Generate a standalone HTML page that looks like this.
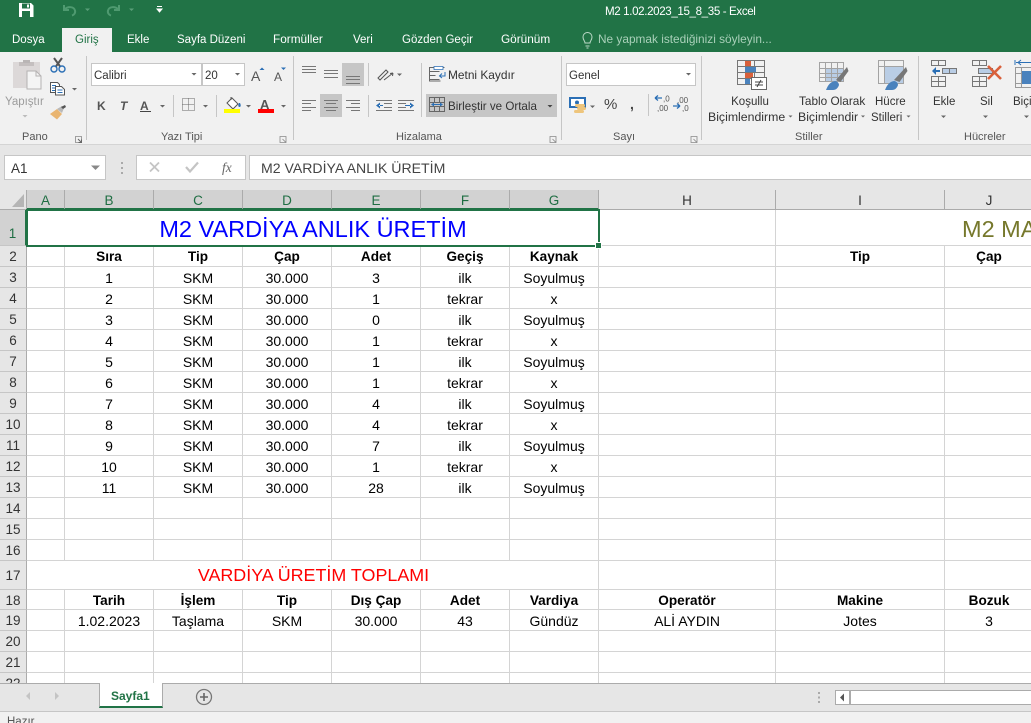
<!DOCTYPE html>
<html lang="tr"><head><meta charset="utf-8"><title>M2 1.02.2023_15_8_35 - Excel</title>
<style>
html,body{margin:0;padding:0;width:1031px;height:723px;overflow:hidden;background:#f1f1f1}
body{position:relative;font-family:"Liberation Sans",sans-serif;color:#444}
.a{position:absolute}
.t{position:absolute;white-space:nowrap;font-size:11.5px;line-height:14px}
.c{transform:translateX(-50%)}
.w{color:#fff}
.lb{color:#555;font-size:11px}
.box{position:absolute;background:#fff;border:1px solid #c6c6c6;box-sizing:border-box}
.ch{position:absolute;top:190px;height:20px;box-sizing:border-box;border-right:1px solid #ababab;border-bottom:1px solid #ababab;background:#e6e6e6;text-align:center;font-size:13.5px;line-height:22px;color:#333}
.ch.s{background:#d2d2d2;color:#1f6e43;border-bottom:2px solid #217346}
table{border-collapse:separate;border-spacing:0;table-layout:fixed}
#g td{box-sizing:border-box;border-right:1px solid #d4d4d4;border-bottom:1px solid #d4d4d4;padding:2px 0 0;text-align:center;font-size:14px;color:#000;white-space:nowrap;overflow:hidden;line-height:16px}
#g tr.b td{font-weight:bold;font-size:13.6px}
#r td{box-sizing:border-box;width:27px;padding:2px 0 0;background:#e6e6e6;border-right:1px solid #ababab;border-bottom:1px solid #c6c6c6;text-align:center;font-size:13.5px;color:#333;line-height:16px}
</style></head><body>

<!-- title bar -->
<div class="a" style="left:0;top:0;width:1031px;height:52px;background:#217346"></div>
<div class="t w" style="left:605px;top:5px;font-size:11.6px;letter-spacing:-.38px">M2 1.02.2023_15_8_35 - Excel</div>
<div class="a" style="left:62px;top:28px;width:50px;height:24px;background:#f1f1f1"></div>
<div class="t w" style="left:12px;top:33px">Dosya</div>
<div class="t" style="left:75px;top:33px;color:#217346">Giriş</div>
<div class="t w" style="left:127px;top:33px">Ekle</div>
<div class="t w" style="left:177px;top:33px">Sayfa Düzeni</div>
<div class="t w" style="left:273px;top:32px;font-size:11.8px">Formüller</div>
<div class="t w" style="left:353px;top:33px">Veri</div>
<div class="t w" style="left:402px;top:33px">Gözden Geçir</div>
<div class="t w" style="left:501px;top:32px;font-size:11.8px">Görünüm</div>
<div class="t" style="left:598px;top:32px;color:#a9d0b9;font-size:11.85px">Ne yapmak istediğinizi söyleyin...</div>

<!-- ribbon base -->
<div class="a" style="left:0;top:144px;width:1031px;height:46px;background:#e6e6e6;border-top:1px solid #d4d4d4;box-sizing:border-box"></div>

<!-- ribbon fields and highlighted buttons -->
<div class="box" style="left:91px;top:63px;width:111px;height:23px"></div>
<div class="box" style="left:202px;top:63px;width:43px;height:23px"></div>
<div class="t" style="left:94px;top:69px;color:#333">Calibri</div>
<div class="t" style="left:205px;top:69px;color:#333">20</div>
<div class="a" style="left:342px;top:63px;width:22px;height:23px;background:#c6c6c6"></div>
<div class="a" style="left:320px;top:94px;width:22px;height:23px;background:#c6c6c6"></div>
<div class="a" style="left:426px;top:94px;width:131px;height:23px;background:#c6c6c6"></div>
<div class="box" style="left:566px;top:63px;width:130px;height:23px"></div>
<div class="t" style="left:569px;top:69px;color:#333">Genel</div>

<!-- ribbon icons -->
<svg class="a" style="left:0;top:0" width="1031" height="150" viewBox="0 0 1031 150" fill="none">
 <!-- save -->
 <path d="M19 3h12l2.500 2.500V17H19z" fill="#fff"/><path d="M22 3.500h8v5h-8z" fill="#217346"/><path d="M27 4.500h2v3h-2z" fill="#fff"/><path d="M22 11h8v6h-8z" fill="#217346"/>
 <!-- undo/redo -->
 <path d="M64 5v5h5M64.500 9.500C68 6 74 6.500 75 10.500c.6 2.500-1 4.500-3 5" stroke="#4f9a70" stroke-width="2"/>
 <path d="M119 5v5h-5M118.500 9.500C115 6 109 6.500 108 10.500c-.6 2.500 1 4.500 3 5" stroke="#4f9a70" stroke-width="2"/>
 <path d="M85 8.500h5l-2.500 2.500zM129 8.500h5l-2.500 2.500z" fill="#5a9f79"/>
 <path d="M157 6.500h5M157 9h5l-2.500 3z" stroke="#fff" fill="#fff"/>
 <!-- lightbulb -->
 <path d="M585 43c0-2-2-3-2-6a4.500 4.500 0 0 1 9 0c0 3-2 4-2 6zM585.500 46h4M586.500 48h2" stroke="#bcdac8" stroke-width="1"/>

 <!-- paste -->
 <path d="M13 62h27v26H13z" fill="#dcd8d8"/><path d="M19 62h15v4H19z" fill="#c4bfbf"/><path d="M23 60h7v3h-7z" fill="#b9b5b5"/>
 <path d="M27 71h9l5 5v13H27z" fill="#f4f4f4" stroke="#b5b2b2"/><path d="M36 71v5h5" stroke="#b5b2b2"/>
 <path d="M22.500 115h5l-2.500 2.500z" fill="#bbb"/>
 <!-- cut -->
 <path d="M54 58l6.500 9M62 58l-6.500 9" stroke="#555" stroke-width="2"/>
 <circle cx="54" cy="69" r="3" stroke="#2b6fb5" stroke-width="1.400"/><circle cx="62" cy="69" r="3" stroke="#2b6fb5" stroke-width="1.400"/>
 <!-- copy -->
 <path d="M50.500 82.500h7l2 2v8h-9z" fill="#fff" stroke="#555"/><path d="M55.500 86.500h6l3 3v5.500h-9z" fill="#fff" stroke="#555"/>
 <path d="M52 85.500h4M52 88h3M52 90.500h3M57.500 90h5M57.500 92.500h5" stroke="#2b6fb5"/>
 <path d="M72 88h5l-2.500 2.500z" fill="#666"/>
 <!-- painter -->
 <path d="M50 114l7-5 5 5-5 5.500z" fill="#e9b571"/><path d="M57 109l5-3 2 2-2 5z" fill="#b9b9b9"/><path d="M61 107l4-2 1 2-3 2z" fill="#555"/>
 <path d="M75.500 136.500h6v6h-6z" stroke="#888" stroke-width=".8"/><path d="M78 139l3.500 3.500M81.500 139.500v3h-3" stroke="#666"/>
 <path d="M86.500 56v84M293.500 56v84M561.500 56v84M701.500 56v84M918.500 56v84" stroke="#c6c6c6"/>
 <!-- font dropdowns -->
 <path d="M191.500 73h5l-2.500 2.500zM235 73h5l-2.500 2.500zM686 73h5l-2.500 2.500z" fill="#666"/>
 <!-- grow/shrink -->
 <text x="251" y="81" font-family="Liberation Sans" font-size="14" fill="#555">A</text>
 <path d="M259.500 70h5l-2.500-2.500z" fill="#2b6fb5"/>
 <text x="274" y="81" font-family="Liberation Sans" font-size="12" fill="#555">A</text>
 <path d="M281 67.500h5l-2.500 2.500z" fill="#2b6fb5"/>
 <!-- bold/italic/underline -->
 <text x="97" y="110" font-family="Liberation Sans" font-weight="bold" font-size="12" fill="#555">K</text>
 <text x="120" y="110" font-family="Liberation Sans" font-weight="bold" font-style="italic" font-size="12" fill="#555">T</text>
 <text x="140" y="110" font-family="Liberation Sans" font-weight="bold" font-size="12" fill="#555">A</text>
 <path d="M140 111.500h11" stroke="#444"/>
 <path d="M160 105h5l-2.500 2.500zM203 105h5l-2.500 2.500zM246 105h5l-2.500 2.500zM281 105h5l-2.500 2.500z" fill="#666"/>
 <path d="M173.500 95v22M216.500 95v22" stroke="#c6c6c6"/>
 <!-- borders -->
 <path d="M182.500 98.500h12v12h-12zM188.500 98.500v12M182.500 104.500h12" stroke="#666" stroke-dasharray="1 1"/>
 <!-- fill colour -->
 <path d="M227 103l5-5 6 6-5 5z" fill="#fff" stroke="#555"/><path d="M231 97v3" stroke="#555"/>
 <path d="M239 103c-1 2-1 4 .500 4s1.500-2 .500-4z" fill="#2b6fb5"/>
 <rect x="224" y="109" width="16" height="4" fill="#ffff00"/>
 <!-- font colour -->
 <text x="260" y="109" font-family="Liberation Sans" font-weight="bold" font-size="13" fill="#555">A</text>
 <rect x="258" y="109" width="16" height="4" fill="#ff0000"/>
 <!-- alignment -->
 <g stroke="#777"><path d="M302 66.500h14M302 69.500h14M302 72.500h14"/><path d="M324 70.500h14M324 73.500h14M324 77.500h14"/><path d="M346 76.500h14M346 79.500h14M346 83.500h14"/>
 <path d="M302 100.500h14M302 103.500h9M302 107.500h14M302 110.500h9"/><path d="M324 100.500h14M326 103.500h10M324 107.500h14M326 110.500h10"/><path d="M346 100.500h14M351 103.500h9M346 107.500h14M351 110.500h9"/>
 <path d="M376 100.500h16M384 103.500h8M384 107.500h8M376 110.500h16M398 100.500h16M398 103.500h8M398 107.500h8M398 110.500h16" /></g>
 <path d="M376 105.500l4-3v6zM383 105h-4v1h4zM414 105.500l-4-3v6zM405 105h6v1h-6z" fill="#2b6fb5"/>
 <path d="M368.500 63v23M368.500 95v22M421.500 63v54" stroke="#c6c6c6"/>
 <!-- orientation -->
 <path d="M378 78l8-8 2 2-8 8zM384 80l9-7M393 73l-3 .5M393 73l-.5 3" stroke="#555" fill="none"/>
 <path d="M397 73.500h5l-2.500 2.500z" fill="#666"/>
 <!-- wrap text -->
 <path d="M429.500 67.500h15M429.500 71.500h10M429.500 75.500h6M429.500 79.500h10" stroke="#666"/>
 <path d="M429.500 67v14h11" stroke="#666"/><path d="M434 66.500h9v3h-9z" fill="#fff" stroke="#2b6fb5" stroke-width=".8"/>
 <path d="M445 72v4h-5M442 73.500l-2.500 2.500 2.500 2" stroke="#2b6fb5"/>
 <!-- merge -->
 <path d="M429.500 97.500h15v14h-15zM429.500 102.500h15M429.500 106.500h15M434.500 97.500v5M439.500 97.500v5M434.500 106.500v5M439.500 106.500v5" stroke="#666"/>
 <path d="M432 104.500h10" stroke="#2b6fb5"/><path d="M434 102.500l-3 2 3 2zM440 102.500l3 2-3 2z" fill="#2b6fb5"/>
 <path d="M547.500 105h5l-2.500 2.500z" fill="#444"/>
 <!-- accounting -->
 <rect x="570" y="98" width="15" height="9" fill="#fff" stroke="#2b6fb5" stroke-width="2"/><circle cx="577" cy="102.500" r="2" fill="#2b6fb5"/>
 <rect x="575" y="104" width="10" height="3" rx="1.500" fill="#eec57c"/><rect x="577" y="107" width="9" height="3" rx="1.500" fill="#eec57c"/><rect x="574" y="110" width="10" height="3" rx="1.500" fill="#eec57c"/>
 <path d="M590 105.500h5l-2.500 2.500z" fill="#666"/>
 <path d="M648.500 94v22" stroke="#c6c6c6"/>
 <path d="M655 98h7M655 98l3-2.500M655 98l3 2.500M680 106h-7M680 106l-3-2.500M680 106l-3 2.500" stroke="#2b6fb5" stroke-width="1.300"/>
 <text x="663" y="101.500" font-family="Liberation Sans" font-size="8" fill="#555">,0</text>
 <text x="657" y="111" font-family="Liberation Sans" font-size="8" fill="#555">,00</text>
 <text x="677" y="103" font-family="Liberation Sans" font-size="8" fill="#555">,00</text>
 <text x="682" y="111" font-family="Liberation Sans" font-size="8" fill="#555">,0</text>
 <path d="M550 136.500h6v6h-6zM552.500 139l3.500 3.500" stroke="#888" stroke-width=".8" transform="translate(-270 0)"/>
 <path d="M550 136.500h6v6h-6zM552.500 139l3.500 3.500" stroke="#888" stroke-width=".8"/>
 <path d="M550 136.500h6v6h-6zM552.500 139l3.500 3.500" stroke="#888" stroke-width=".8" transform="translate(141 0)"/>
 <!-- conditional formatting -->
 <path d="M737.500 60.500h27v24h-27zM737.500 66.500h27M737.500 72.500h27M737.500 78.500h27M745.500 60.500v24M754.500 60.500v24" stroke="#777"/>
 <rect x="745" y="61" width="6" height="5" fill="#d9603b"/><rect x="745" y="67" width="11" height="5" fill="#4a82bd"/><rect x="745" y="73" width="8" height="5" fill="#d9603b"/><rect x="745" y="79" width="5" height="5" fill="#4a82bd"/>
 <rect x="751.500" y="77.500" width="15" height="12" fill="#fff" stroke="#666"/>
 <path d="M755 82h8M755 85h8M761 80l-4 7" stroke="#444"/>
 <!-- format as table -->
 <rect x="826" y="68" width="18" height="14" fill="#b9cde5"/>
 <path d="M819.500 62.500h24v19h-24zM819.500 68.500h24M819.500 73.500h24M819.500 77.500h24M825.500 62.500v19M831.500 62.500v19M837.500 62.500v19" stroke="#a3a3a3"/>
 <path d="M836 80l11-13 1.500 4-8 11z" fill="#777"/>
 <path d="M826 90c2-5 4-8 9-9 2 0 4 2 4 4-1 3-3 5-6 5z" fill="#4a82bd"/>
 <!-- cell styles -->
 <rect x="885" y="67" width="18" height="16" fill="#b9cde5"/>
 <path d="M878.500 60.500h25v23h-25zM878.500 66.500h25M884.500 60.500v23" stroke="#a3a3a3"/>
 <path d="M894 80l12-13 1.500 4-8 11z" fill="#777"/>
 <path d="M885 90c2-5 4-8 9-9 2 0 4 2 4 4-1 3-3 5-6 5z" fill="#4a82bd"/>
 <!-- insert -->
 <path d="M931.500 60.500h14v5h-14zM938.500 60.500v5M931.500 76.500h14v10h-14zM931.500 81.500h14M938.500 76.500v10" stroke="#777"/>
 <path d="M942.500 68.500h14v5h-14zM949.500 68.500v5" stroke="#777" fill="#b9cde5"/>
 <path d="M933 71h7" stroke="#2b6fb5" stroke-width="2"/><path d="M936 67l-4 4 4 4z" fill="#2b6fb5"/>
 <path d="M941 115.500h5l-2.500 2.500z" fill="#666"/>
 <!-- delete -->
 <path d="M972.500 60.500h14v5h-14zM979.500 60.500v5M972.500 76.500h14v10h-14zM972.500 81.500h14M979.500 76.500v10" stroke="#777"/>
 <path d="M978.500 68.500h14v5h-14z" stroke="#777" fill="#b9cde5"/>
 <path d="M988 66l13 13M1001 66l-13 13" stroke="#d9603b" stroke-width="2.600"/>
 <path d="M983 115.500h5l-2.500 2.500z" fill="#666"/>
 <!-- format -->
 <path d="M1015 60v5M1016 62.500h15" stroke="#2b6fb5"/><path d="M1021 60l-3 2.500 3 2.500" stroke="#2b6fb5"/>
 <path d="M1015.500 67.500h16v20h-16zM1021.500 67.500v20M1015.500 73.500h16M1015.500 83.500h16" stroke="#999"/>
 <rect x="1022" y="71" width="9" height="13" fill="#4a82bd"/>
 <path d="M1024 115.500h5l-2.500 2.500z" fill="#666"/>
 <path d="M788.500 115.500h4l-2 2zM861 115.500h4l-2 2zM906.500 115.500h4l-2 2z" fill="#666"/>
</svg>

<!-- ribbon text -->
<div class="t" style="left:5px;top:95px;color:#9c9c9c">Yapıştır</div>
<div class="t lb" style="left:22px;top:130px">Pano</div>
<div class="t lb" style="left:161px;top:130px">Yazı Tipi</div>
<div class="t lb" style="left:396px;top:130px">Hizalama</div>
<div class="t lb" style="left:613px;top:130px">Sayı</div>
<div class="t lb" style="left:795px;top:130px">Stiller</div>
<div class="t lb" style="left:964px;top:130px">Hücreler</div>
<div class="t" style="left:448px;top:68px;color:#333;font-size:11.9px">Metni Kaydır</div>
<div class="t" style="left:448px;top:100px;color:#333;font-size:11.6px">Birleştir ve Ortala</div>
<div class="t" style="left:604px;top:98px;color:#444;font-size:15px;font-weight:normal">%</div>
<div class="t" style="left:630px;top:97px;color:#444;font-size:14px;font-weight:bold">,</div>
<div class="t c" style="left:750px;top:95px;color:#333">Koşullu</div>
<div class="t" style="left:708px;top:110px;color:#333;font-size:12.3px">Biçimlendirme</div>
<div class="t" style="left:799px;top:94px;color:#333;font-size:11.8px">Tablo Olarak</div>
<div class="t" style="left:798px;top:110px;color:#333;font-size:12.3px">Biçimlendir</div>
<div class="t" style="left:875px;top:95px;color:#333">Hücre</div>
<div class="t" style="left:871px;top:111px;color:#333">Stilleri</div>
<div class="t" style="left:933px;top:95px;color:#333">Ekle</div>
<div class="t" style="left:980px;top:95px;color:#333">Sil</div>
<div class="t" style="left:1013px;top:95px;color:#333">Biçim</div>

<!-- formula bar -->
<div class="box" style="left:4px;top:155px;width:102px;height:25px"></div>
<div class="t" style="left:11px;top:162px;font-size:13.5px;color:#333">A1</div>
<div class="box" style="left:136px;top:155px;width:110px;height:25px"></div>
<div class="box" style="left:249px;top:155px;width:790px;height:25px"></div>
<div class="t" style="left:261px;top:161px;font-size:14.1px;color:#444">M2 VARDİYA ANLIK ÜRETİM</div>
<svg class="a" style="left:0;top:150px" width="250" height="40" fill="none">
 <path d="M91 15.500h9l-4.500 4.500z" fill="#888"/>
 <path d="M121 12h2v2h-2zM121 17h2v2h-2zM121 22h2v2h-2z" fill="#aaa"/>
 <path d="M150 12.500l9 9M159 12.500l-9 9" stroke="#c4c4c4" stroke-width="1.800"/>
 <path d="M186 17l4 4.500 8-9" stroke="#c4c4c4" stroke-width="2.200"/>
 <text x="222" y="22" font-family="Liberation Serif" font-style="italic" font-size="13.500" fill="#666">fx</text>
</svg>

<!-- column headers -->
<div class="ch" style="left:0;width:27px"></div>
<svg class="a" style="left:11px;top:193px" width="14" height="14"><path d="M13 1v13H1z" fill="#b5b5b5"/></svg>
<div class="ch s" style="left:27px;width:38px">A</div>
<div class="ch s" style="left:65px;width:89px">B</div>
<div class="ch s" style="left:154px;width:89px">C</div>
<div class="ch s" style="left:243px;width:89px">D</div>
<div class="ch s" style="left:332px;width:89px">E</div>
<div class="ch s" style="left:421px;width:89px">F</div>
<div class="ch s" style="left:510px;width:89px">G</div>
<div class="ch" style="left:599px;width:177px">H</div>
<div class="ch" style="left:776px;width:169px">I</div>
<div class="ch" style="left:945px;width:89px">J</div>

<!-- row headers -->
<div class="a" style="left:0;top:210px;width:27px;height:473px;overflow:hidden">
<table id="r"><tbody>
<tr style="height:36px"><td style="background:#d2d2d2;color:#1f6e43;border-right:2px solid #217346;padding-top:12px">1</td></tr>
<tr style="height:21px"><td>2</td></tr><tr style="height:21px"><td>3</td></tr><tr style="height:21px"><td>4</td></tr><tr style="height:21px"><td>5</td></tr><tr style="height:21px"><td>6</td></tr><tr style="height:21px"><td>7</td></tr><tr style="height:21px"><td>8</td></tr><tr style="height:21px"><td>9</td></tr><tr style="height:21px"><td>10</td></tr><tr style="height:21px"><td>11</td></tr><tr style="height:21px"><td>12</td></tr><tr style="height:21px"><td>13</td></tr><tr style="height:21px"><td>14</td></tr><tr style="height:21px"><td>15</td></tr><tr style="height:21px"><td>16</td></tr>
<tr style="height:29px"><td>17</td></tr><tr style="height:20px"><td>18</td></tr><tr style="height:21px"><td>19</td></tr><tr style="height:21px"><td>20</td></tr><tr style="height:21px"><td>21</td></tr><tr style="height:21px"><td>22</td></tr>
</tbody></table></div>

<!-- grid -->
<div class="a" style="left:27px;top:210px;width:1004px;height:473px;overflow:hidden;background:#fff">
<table id="g" style="width:1007px"><colgroup><col style="width:38px"><col style="width:89px"><col style="width:89px"><col style="width:89px"><col style="width:89px"><col style="width:89px"><col style="width:89px"><col style="width:177px"><col style="width:169px"><col style="width:89px"></colgroup><tbody>
<tr style="height:36px"><td colspan="7"></td><td></td><td colspan="2"></td></tr>
<tr class="b" style="height:21px"><td></td><td>Sıra</td><td>Tip</td><td>Çap</td><td>Adet</td><td>Geçiş</td><td>Kaynak</td><td></td><td>Tip</td><td>Çap</td></tr>
<tr style="height:21px"><td></td><td>1</td><td>SKM</td><td>30.000</td><td>3</td><td>ilk</td><td>Soyulmuş</td><td></td><td></td><td></td></tr>
<tr style="height:21px"><td></td><td>2</td><td>SKM</td><td>30.000</td><td>1</td><td>tekrar</td><td>x</td><td></td><td></td><td></td></tr>
<tr style="height:21px"><td></td><td>3</td><td>SKM</td><td>30.000</td><td>0</td><td>ilk</td><td>Soyulmuş</td><td></td><td></td><td></td></tr>
<tr style="height:21px"><td></td><td>4</td><td>SKM</td><td>30.000</td><td>1</td><td>tekrar</td><td>x</td><td></td><td></td><td></td></tr>
<tr style="height:21px"><td></td><td>5</td><td>SKM</td><td>30.000</td><td>1</td><td>ilk</td><td>Soyulmuş</td><td></td><td></td><td></td></tr>
<tr style="height:21px"><td></td><td>6</td><td>SKM</td><td>30.000</td><td>1</td><td>tekrar</td><td>x</td><td></td><td></td><td></td></tr>
<tr style="height:21px"><td></td><td>7</td><td>SKM</td><td>30.000</td><td>4</td><td>ilk</td><td>Soyulmuş</td><td></td><td></td><td></td></tr>
<tr style="height:21px"><td></td><td>8</td><td>SKM</td><td>30.000</td><td>4</td><td>tekrar</td><td>x</td><td></td><td></td><td></td></tr>
<tr style="height:21px"><td></td><td>9</td><td>SKM</td><td>30.000</td><td>7</td><td>ilk</td><td>Soyulmuş</td><td></td><td></td><td></td></tr>
<tr style="height:21px"><td></td><td>10</td><td>SKM</td><td>30.000</td><td>1</td><td>tekrar</td><td>x</td><td></td><td></td><td></td></tr>
<tr style="height:21px"><td></td><td>11</td><td>SKM</td><td>30.000</td><td>28</td><td>ilk</td><td>Soyulmuş</td><td></td><td></td><td></td></tr>
<tr style="height:21px"><td></td><td></td><td></td><td></td><td></td><td></td><td></td><td></td><td></td><td></td></tr>
<tr style="height:21px"><td></td><td></td><td></td><td></td><td></td><td></td><td></td><td></td><td></td><td></td></tr>
<tr style="height:21px"><td></td><td></td><td></td><td></td><td></td><td></td><td></td><td></td><td></td><td></td></tr>
<tr style="height:29px"><td colspan="7" style="color:#ff0000;font-size:17.9px;line-height:26px;padding:0 0 0 2px">VARDİYA ÜRETİM TOPLAMI</td><td></td><td></td><td></td></tr>
<tr class="b" style="height:20px"><td></td><td>Tarih</td><td>İşlem</td><td>Tip</td><td>Dış Çap</td><td>Adet</td><td>Vardiya</td><td>Operatör</td><td>Makine</td><td>Bozuk</td></tr>
<tr style="height:21px"><td></td><td>1.02.2023</td><td>Taşlama</td><td>SKM</td><td>30.000</td><td>43</td><td>Gündüz</td><td>ALİ AYDIN</td><td>Jotes</td><td>3</td></tr>
<tr style="height:21px"><td></td><td></td><td></td><td></td><td></td><td></td><td></td><td></td><td></td><td></td></tr>
<tr style="height:21px"><td></td><td></td><td></td><td></td><td></td><td></td><td></td><td></td><td></td><td></td></tr>
<tr style="height:21px"><td></td><td></td><td></td><td></td><td></td><td></td><td></td><td></td><td></td><td></td></tr>
</tbody></table></div>

<!-- merged titles and selection -->
<div class="t c" style="left:313px;top:214px;font-size:23.5px;line-height:30px;color:#0000ff">M2 VARDİYA ANLIK ÜRETİM</div>
<div class="t" style="left:962px;top:214px;font-size:23.5px;line-height:30px;color:#76782c">M2 MA</div>
<div class="a" style="left:26px;top:209px;width:574px;height:38px;border:2px solid #217346;box-sizing:border-box"></div>
<div class="a" style="left:595px;top:242px;width:5px;height:5px;background:#217346;border:1px solid #fff"></div>

<!-- sheet tabs -->
<div class="a" style="left:0;top:683px;width:1031px;height:29px;background:#e6e6e6;border-top:1px solid #ababab;border-bottom:1px solid #c6c6c6;box-sizing:border-box"></div>
<div class="a" style="left:99px;top:683px;width:64px;height:25px;background:#fff;border-left:1px solid #ababab;border-right:1px solid #ababab;border-bottom:2px solid #217346;box-sizing:border-box"></div>
<div class="t" style="left:111px;top:689px;font-size:12px;font-weight:bold;color:#217346">Sayfa1</div>
<svg class="a" style="left:0;top:684px" width="1031" height="27" fill="none">
 <path d="M30 8v8l-4-4zM55 8v8l4-4z" fill="#c4c4c4"/>
 <circle cx="204" cy="13" r="7.500" stroke="#777" stroke-width="1.300"/><path d="M200 13h8M204 9v8" stroke="#666" stroke-width="1.600"/>
 <path d="M818 8h2v2h-2zM818 12.500h2v2h-2zM818 17h2v2h-2z" fill="#aaa"/>
 <path d="M1031 6.500H835.500v14H1031" fill="#fff" stroke="#ababab"/>
 <rect x="849" y="7" width="2" height="13" fill="#ababab"/>
 <path d="M844 9.500v8l-4-4z" fill="#555"/>
</svg>

<!-- status bar -->
<div class="t" style="left:7px;top:715px;font-size:11.5px;color:#555">Hazır</div>
</body></html>
